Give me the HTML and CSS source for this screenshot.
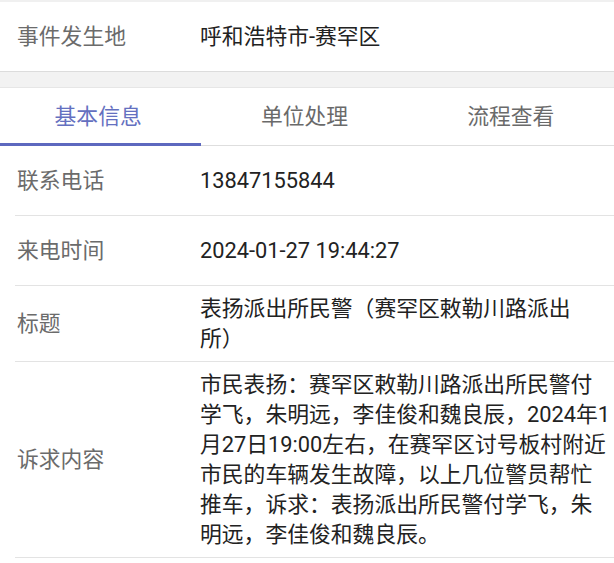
FILE: index.html
```html
<!DOCTYPE html>
<html lang="zh-CN">
<head>
  <meta charset="UTF-8">
  <meta name="viewport" content="width=device-width, initial-scale=1.0">
  <title>工单详情</title>
  <link rel="stylesheet" href="styles.css">
</head>
<body>
  <!-- Location summary -->
  <div class="summary">
    <div class="info-row">
      <div class="info-label">事件发生地</div>
      <div class="info-value">呼和浩特市-赛罕区</div>
    </div>
  </div>

  <div class="spacer"></div>

  <!-- Tabs -->
  <div class="tabs">
    <div class="tab active">基本信息</div>
    <div class="tab">单位处理</div>
    <div class="tab">流程查看</div>
  </div>

  <!-- Basic info list -->
  <div class="info-list">
    <div class="info-row">
      <div class="info-label">联系电话</div>
      <div class="info-value">13847155844</div>
    </div>
    <div class="info-row">
      <div class="info-label">来电时间</div>
      <div class="info-value">2024-01-27 19:44:27</div>
    </div>
    <div class="info-row">
      <div class="info-label">标题</div>
      <div class="info-value">表扬派出所民警（赛罕区敕勒川路派出所）</div>
    </div>
    <div class="info-row">
      <div class="info-label">诉求内容</div>
      <div class="info-value">市民表扬：赛罕区敕勒川路派出所民警付学飞，朱明远，李佳俊和魏良辰，2024年1月27日19:00左右，在赛罕区讨号板村附近市民的车辆发生故障，以上几位警员帮忙推车，诉求：表扬派出所民警付学飞，朱明远，李佳俊和魏良辰。</div>
    </div>
  </div>
</body>
</html>
```

FILE: styles.css
```css
body {
  margin: 0;
  padding: 0;
  overflow: hidden;
  background-color: #fff;
  color: #222;
  font-family: Roboto, "Noto Sans CJK SC", sans-serif;
  font-size: 21.8px;
  line-height: 30px;
  text-spacing-trim: space-all;
}

.summary {
  border-top: 2px solid #f0f0f0;
  border-bottom: 1px solid #dcdcdc;
}

.summary .info-row {
  margin-left: 0;
  padding-left: 17px;
  border-bottom: none;
  min-height: 69px;
}

.spacer {
  height: 15px;
  background-color: #f2f2f2;
  border-bottom: 1px solid #e6e6e6;
}

/* Tabs */
.tabs {
  display: flex;
  margin-left: -5px;
  border-bottom: 1px solid #dedede;
}

.tab {
  flex: 1;
  height: 58px;
  display: flex;
  align-items: center;
  justify-content: center;
  color: #6a6a6a;
  box-sizing: border-box;
  border-bottom: 3px solid transparent;
  margin-bottom: -1px;
  padding-top: 2px;
}

.tab.active {
  color: #6470c0;
  border-bottom-color: #5d68bf;
}

/* Info rows */
.info-row {
  display: flex;
  align-items: center;
  box-sizing: border-box;
  min-height: 70px;
  margin-left: 15px;
  padding: 7.5px 2px;
  border-bottom: 1px solid #e3e3e3;
}

.info-label {
  flex: 0 0 183px;
  color: #6b6b6b;
}

.info-value {
  flex: 1;
  min-width: 0;
}
```
